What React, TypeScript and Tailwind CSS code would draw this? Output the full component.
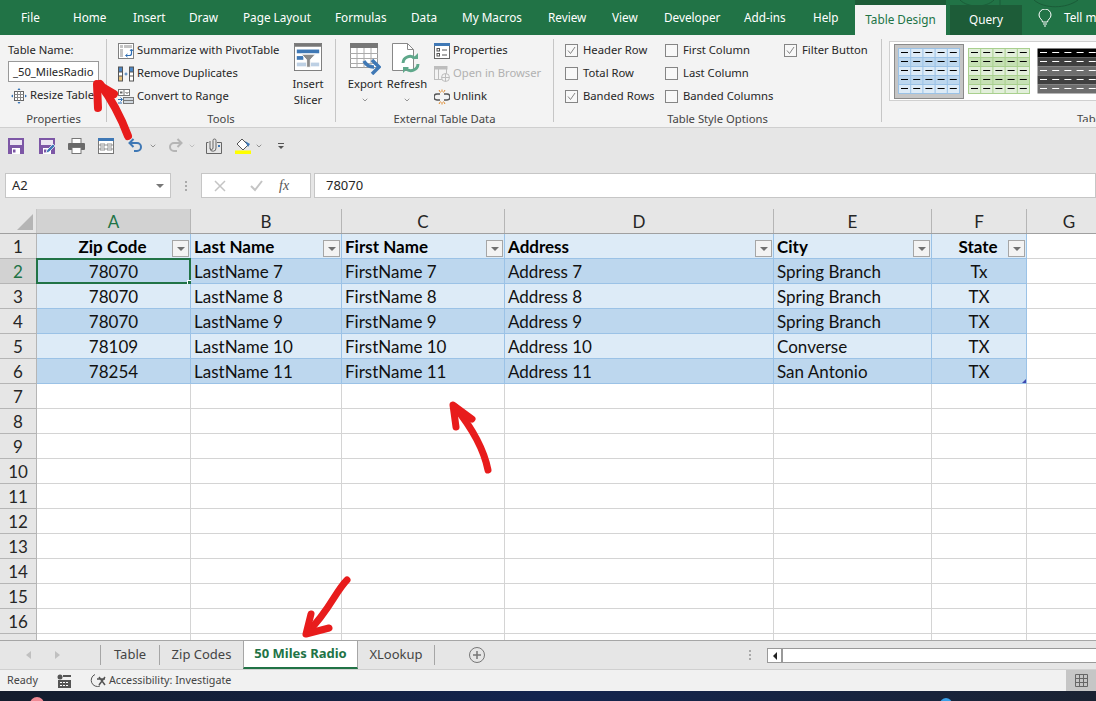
import React from "react";
import { ChevronDown } from "lucide-react";

const uiFont = { fontFamily: '"Noto Sans", "Open Sans", sans-serif' };
const cellFont = { fontFamily: 'Lato, "Open Sans", sans-serif' };

const tabs = [
  { name: "File", cls: "w-[52px]" },
  { name: "Home", cls: "w-[60px]" },
  { name: "Insert", cls: "w-[56px]" },
  { name: "Draw", cls: "w-[54px]" },
  { name: "Page Layout", cls: "w-[92px]" },
  { name: "Formulas", cls: "w-[76px]" },
  { name: "Data", cls: "w-[51px]" },
  { name: "My Macros", cls: "w-[86px]" },
  { name: "Review", cls: "w-[64px]" },
  { name: "View", cls: "w-[52px]" },
  { name: "Developer", cls: "w-[80px]" },
  { name: "Add-ins", cls: "w-[69px]" },
  { name: "Help", cls: "w-[42px]" },
];

const columns = [
  { label: "A", cls: "w-[154px]" },
  { label: "B", cls: "w-[151px]" },
  { label: "C", cls: "w-[163px]" },
  { label: "D", cls: "w-[269px]" },
  { label: "E", cls: "w-[158px]" },
  { label: "F", cls: "w-[95px]" },
  { label: "G", cls: "w-[85px]" },
];

const tableRows = [
  ["78070", "LastName 7", "FirstName 7", "Address 7", "Spring Branch", "Tx"],
  ["78070", "LastName 8", "FirstName 8", "Address 8", "Spring Branch", "TX"],
  ["78070", "LastName 9", "FirstName 9", "Address 9", "Spring Branch", "TX"],
  ["78109", "LastName 10", "FirstName 10", "Address 10", "Converse", "TX"],
  ["78254", "LastName 11", "FirstName 11", "Address 11", "San Antonio", "TX"],
];

const headers = ["Zip Code", "Last Name", "First Name", "Address", "City", "State"];

const Check = () => (
  <svg width="9" height="9" viewBox="0 0 9 9" fill="none" stroke="#777" strokeWidth="0.9">
    <path d="M1 4.5 3.5 7.5 8 1" />
  </svg>
);

const Option = ({ label, checked }: { label: string; checked?: boolean }) => (
  <div className="flex h-[23px] items-center">
    <span className="flex h-[13px] w-[13px] items-center justify-center border border-[#858585] bg-[#f8f8f8]">
      {checked && <Check />}
    </span>
    <span className="ml-[5px] whitespace-nowrap">{label}</span>
  </div>
);

const GroupLabel = ({ text }: { text: string }) => (
  <div className="mt-[4px] h-[14px] text-center leading-[14px] text-[#444]">{text}</div>
);

const StyleTile = ({ kind }: { kind: "blue" | "green" | "black" }) => {
  const band =
    kind === "blue"
      ? ["#ddebf7", "#bdd7ee"]
      : kind === "green"
      ? ["#e2efda", "#c6e0b4"]
      : ["#000000", "#404040", "#6e6e6e", "#404040", "#6e6e6e"];
  const line = kind === "blue" ? "#9bc2e6" : kind === "green" ? "#a9d08e" : "none";
  const dash = kind === "black" ? "#fff" : "#000";
  return (
    <svg width="62" height="46" viewBox="0 0 62 46" className="shrink-0">
      {[0, 1, 2, 3, 4].map((r) => (
        <g key={r}>
          <rect
            x="0.5"
            y={r * 9 + 0.5}
            width="61"
            height="9"
            fill={kind === "black" ? band[r] : band[r % 2]}
            stroke={line}
          />
          {[0, 1, 2, 3, 4].map((c) => (
            <g key={c}>
              {kind !== "black" && c > 0 && (
                <path d={`M${c * 12.2 + 0.5} ${r * 9}v9`} stroke={line} />
              )}
              <path d={`M${c * 12.2 + 3} ${r * 9 + 4.5}h7`} stroke={dash} />
            </g>
          ))}
        </g>
      ))}
    </svg>
  );
};

const IconSummarize = () => (
  <svg width="16" height="16" viewBox="0 0 16 16" fill="none">
    <rect x="0.5" y="0.5" width="15" height="15" fill="#fff" stroke="#808080" />
    <path d="M2 2h3v3H2zM6 2h8v3H6zM2 6h3v8H2z" fill="#c4c4c4" />
    <path d="M8 12.5h3.5a2 2 0 0 0 2-2V7" stroke="#2f6fb5" strokeWidth="1.2" />
    <path d="M12 8l1.500-2 1.500 2M9.500 11l-2 1.500 2 1.500" stroke="#2f6fb5" />
  </svg>
);

const IconDuplicates = () => (
  <svg width="16" height="16" viewBox="0 0 16 16">
    <rect x="0" y="0.500" width="5" height="15" fill="#555" />
    <rect x="11" y="0.500" width="5" height="15" fill="#555" />
    <rect x="1" y="1.500" width="3" height="4" fill="#4a86c5" />
    <rect x="1" y="6.500" width="3" height="3" fill="#fff" />
    <rect x="1" y="10.500" width="3" height="4" fill="#e8c27c" />
    <rect x="12" y="1.500" width="3" height="4" fill="#4a86c5" />
    <rect x="12" y="6.500" width="3" height="3" fill="#fff" />
    <rect x="12" y="10.500" width="3" height="4" fill="#fff" />
    <path d="M6.500 8h3M8 6.500v3" stroke="#3f78b5" />
  </svg>
);

const IconConvert = () => (
  <svg width="16" height="16" viewBox="0 0 16 16" fill="none">
    <rect x="0.500" y="0.500" width="11" height="6" fill="#fff" stroke="#777" />
    <path d="M6 .5v6" stroke="#777" />
    <rect x="2" y="2.500" width="2.500" height="2" fill="#666" />
    <path d="M7.500 3l1.500 1.500L10.500 3" stroke="#555" />
    <rect x="5.500" y="8.500" width="10" height="3" fill="#d0d8e0" stroke="#777" />
    <rect x="5.500" y="11.500" width="10" height="3" fill="#d0d8e0" stroke="#777" />
    <path d="M0 10.500h4M2.500 8.500l2 2-2 2M0 14h4" stroke="#2f6fb5" />
  </svg>
);

const IconResize = () => (
  <svg width="16" height="16" viewBox="0 0 16 16" fill="none">
    <rect x="3.500" y="3.500" width="9" height="9" fill="#fff" stroke="#666" />
    <path d="M3.500 6.500h9M3.500 9.500h9M6.500 3.500v9M9.500 3.500v9" stroke="#888" />
    <path d="M8 0l-1.500 2h3zM8 16l-1.500-2h3zM0 8l2-1.500v3zM16 8l-2-1.500v3z" fill="#2f6fb5" />
  </svg>
);

const IconSlicer = () => (
  <svg width="30" height="30" viewBox="0 0 30 30">
    <rect x="0.500" y="0.500" width="29" height="29" fill="#fff" stroke="#777" />
    <rect x="1" y="1" width="28" height="3" fill="#777" />
    <rect x="3" y="7" width="24" height="4" fill="#3f78b5" />
    <rect x="3" y="14" width="7" height="4" fill="#3f78b5" />
    <rect x="3" y="21" width="24" height="4" fill="#bdd0e4" />
    <path d="M8 12h15l-5.500 6v8h-4v-8z" fill="#8a8a8a" stroke="#fff" />
  </svg>
);

const IconExport = () => (
  <svg width="31" height="32" viewBox="0 0 31 32" fill="none">
    <rect x="0.500" y="0.500" width="27" height="24" fill="#fff" stroke="#999" />
    <rect x="0" y="0" width="28" height="5" fill="#777" />
    <path d="M0 10.500h28M0 15.500h28M0 20.500h28M7 5v20M14 5v20M21 5v20" stroke="#aaa" />
    <path d="M14 18a11 11 0 0 0 10 6" stroke="#3f78b5" strokeWidth="3.500" />
    <path d="M22 17l7 7-7 7" stroke="#3f78b5" strokeWidth="3.500" />
  </svg>
);

const IconRefresh = () => (
  <svg width="30" height="32" viewBox="0 0 30 32" fill="none">
    <path d="M.5.500h15l6 6v21H.5z" fill="#fff" stroke="#888" />
    <path d="M15.500.500v6h6" stroke="#888" />
    <path d="M11 20a7 7 0 0 1 12-4.500M26 21a7 7 0 0 1-12 4.500" stroke="#5fa88b" strokeWidth="3" />
    <path d="M20 16h6v-6zM17 24h-6v6z" fill="#5fa88b" />
  </svg>
);

const IconProperties = () => (
  <svg width="16" height="16" viewBox="0 0 16 16" fill="none">
    <rect x="0.500" y="0.500" width="15" height="15" fill="#fff" stroke="#666" />
    <rect x="0" y="0" width="16" height="3" fill="#3f78b5" />
    <rect x="3" y="5.500" width="2.500" height="2.500" stroke="#555" />
    <rect x="3" y="10.500" width="2.500" height="2.500" stroke="#555" />
    <path d="M8 7h5M8 12h5" stroke="#555" />
  </svg>
);

const IconBrowser = () => (
  <svg width="16" height="16" viewBox="0 0 16 16" fill="none" stroke="#bdbdbd">
    <rect x="0.500" y="0.500" width="12" height="13" fill="#f3f3f3" />
    <rect x="0" y="0" width="13" height="3" fill="#bdbdbd" />
    <path d="M4.500 3v10" />
    <circle cx="11.500" cy="11.500" r="4" fill="#f3f3f3" />
    <path d="M7.500 11.500h8M11.500 7.500v8" />
  </svg>
);

const IconUnlink = () => (
  <svg width="16" height="16" viewBox="0 0 16 16" fill="none">
    <path d="M6 5H3a2.500 2.500 0 0 0 0 6h3M10 5h3a2.500 2.500 0 0 1 0 6h-3" stroke="#555" strokeWidth="1.500" />
    <path d="M5 1l1.500 2.500M8 .5v2.500M11 1L9.500 3.500M5 15l1.500-2.500M8 15.500V13M11 15l-1.500-2.500" stroke="#e08a2c" />
  </svg>
);

const IconSave = ({ pen }: { pen?: boolean }) => (
  <svg width="16" height="16" viewBox="0 0 16 16">
    <path d="M0 0h16v16H0z" fill="#7d57a6" />
    <rect x="2" y="2" width="12" height="5" fill="#ece6f2" />
    <rect x="4" y="10" width="8" height="6" fill="#fff" />
    <rect x="5" y="11.500" width="2.500" height="3" fill="#7d57a6" />
    {pen && <path d="M7 15l1-3 6-6 2 2-6 6z" fill="#3f78b5" stroke="#fff" strokeWidth="0.700" />}
  </svg>
);

const IconPrint = () => (
  <svg width="17" height="16" viewBox="0 0 17 16">
    <rect x="4" y="0.500" width="9" height="5" fill="#fff" stroke="#777" />
    <rect x="0" y="5" width="17" height="7" rx="1" fill="#6a6a6a" />
    <rect x="4" y="9.500" width="9" height="6" fill="#fff" stroke="#777" />
  </svg>
);

const IconForm = () => (
  <svg width="16" height="16" viewBox="0 0 16 16" fill="none">
    <rect x="0.500" y="0.500" width="15" height="15" fill="#fff" stroke="#777" />
    <rect x="0" y="0" width="16" height="3" fill="#3f78b5" />
    <path d="M2 6h5v2H2zM9 6h5v2H9zM2 10h5v2H2zM9 10h5v2H9z" stroke="#777" strokeWidth="0.800" />
  </svg>
);

const IconUndo = ({ color, flip }: { color: string; flip?: boolean }) => (
  <svg width="15" height="15" viewBox="0 0 15 15" fill="none" className={flip ? "-scale-x-100" : ""}>
    <path d="M2 5h7a4 4 0 0 1 0 8H6" stroke={color} strokeWidth="2" />
    <path d="M5.500 1 1.500 5l4 4" stroke={color} strokeWidth="2" />
  </svg>
);

const IconAttach = () => (
  <svg width="16" height="16" viewBox="0 0 16 16" fill="none" stroke="#666">
    <path d="M.5 4.500h2M11 4.500h4.500v11H.5v-11" />
    <path d="M4 3v7a1.500 1.500 0 0 0 3 0V2.500a1.500 1.500 0 0 1 3 0V10a3 3 0 0 1-6 .5" />
    <rect x="12" y="7" width="2" height="2" fill="#3f78b5" stroke="none" />
  </svg>
);

const IconFill = () => (
  <svg width="16" height="16" viewBox="0 0 16 16" fill="none">
    <path d="M7 1l6 6-5 5-6-6z" fill="#fff" stroke="#555" />
    <path d="M10 3l5 3-2 3z" fill="#3f78b5" />
    <rect x="0" y="12.500" width="16" height="3.500" fill="#ffff00" />
  </svg>
);

const Chevron = ({ cls = "text-[#666]" }: { cls?: string }) => (
  <ChevronDown size={8} strokeWidth={2} className={cls} />
);

const App = () => {
  return (
    <div className="relative flex h-[701px] w-[1096px] flex-col overflow-hidden bg-white text-[#262626]" style={uiFont}>
      {/* title bar with tabs */}
      <div className="relative flex h-[35px] shrink-0 items-end bg-[#217346] pl-[21px] text-[11.75px] text-white">
        <svg className="pointer-events-none absolute left-[950px] top-0" width="146" height="14" viewBox="0 0 146 14" fill="none" stroke="#1a5c38">
          <path d="M10 0c8 8 26 8 34 0M50 0v6a6 6 0 0 0 7 6M84 0c10 9 32 9 44 0" />
        </svg>
        <div className="flex h-[35px] items-center">
          {tabs.map((t) => (
            <span key={t.name} className={`shrink-0 whitespace-nowrap ${t.cls}`}>
              {t.name}
            </span>
          ))}
        </div>
        <div className="relative flex h-[35px] items-end pt-[5px]">
          <span className="absolute left-0 top-0 h-[5px] w-[91px] bg-[#1d5c38]" />
          <div className="flex h-[30px] w-[91px] items-center justify-center bg-[#f3f3f3] text-[#217346]">Table Design</div>
          <div className="ml-[4px] flex h-[30px] w-[72px] items-center justify-center bg-[#1d5c38]">Query</div>
        </div>
        <div className="relative flex h-[35px] items-center">
          <svg width="14" height="18" viewBox="0 0 14 18" fill="none" stroke="#fff" className="ml-[16px]">
            <path d="M4.500 13c0-2.500-3.500-3.500-3.500-7a6 6 0 0 1 12 0c0 3.500-3.500 4.500-3.500 7zM5 15h4M6 17h2" />
          </svg>
          <span className="ml-[12px] whitespace-nowrap">Tell me</span>
        </div>
      </div>

      {/* ribbon */}
      <div className="flex h-[93px] shrink-0 border-b border-[#cfcfcf] bg-[#f3f3f3] pt-[4px] text-[11.25px]">
        <div className="h-[83px] w-[107px] shrink-0 border-r border-[#c6c6c6] pl-[8px] pr-[7px]">
          <div className="flex h-[69px] flex-col">
            <div className="flex h-[22px] shrink-0 items-center">Table Name:</div>
            <div className="h-[21px] w-[91px] shrink-0 border border-[#999] bg-white pl-[4px] leading-[19px]">_50_MilesRadio</div>
            <div className="flex h-[27px] shrink-0 items-center pl-[3px]">
              <IconResize />
              <span className="ml-[3px] whitespace-nowrap">Resize Table</span>
            </div>
          </div>
          <GroupLabel text="Properties" />
        </div>

        <div className="h-[83px] w-[229px] shrink-0 border-r border-[#c6c6c6]">
          <div className="flex h-[69px]">
            <div className="ml-[11px] w-[175px]">
              <div className="flex h-[23px] items-center gap-[3px] whitespace-nowrap"><IconSummarize />Summarize with PivotTable</div>
              <div className="flex h-[23px] items-center gap-[3px] whitespace-nowrap"><IconDuplicates />Remove Duplicates</div>
              <div className="flex h-[23px] items-center gap-[3px] whitespace-nowrap"><IconConvert />Convert to Range</div>
            </div>
            <div className="flex w-[30px] flex-col items-center pt-[4px] text-center leading-[16px]">
              <IconSlicer />
              <div className="mt-[5px]">Insert</div>
              <div>Slicer</div>
            </div>
          </div>
          <GroupLabel text="Tools" />
        </div>

        <div className="h-[83px] w-[218px] shrink-0 border-r border-[#c6c6c6]">
          <div className="flex h-[69px]">
            <div className="ml-[9px] flex w-[40px] flex-col items-center pt-[4px] leading-[16px]">
              <IconExport />
              <div className="mt-px">Export</div>
              <Chevron cls="mt-[4px] text-[#666]" />
            </div>
            <div className="flex w-[44px] flex-col items-center pt-[4px] leading-[16px]">
              <IconRefresh />
              <div className="mt-px">Refresh</div>
              <Chevron cls="mt-[4px] text-[#666]" />
            </div>
            <div className="ml-[5px]">
              <div className="flex h-[23px] items-center gap-[3px] whitespace-nowrap"><IconProperties />Properties</div>
              <div className="flex h-[23px] items-center gap-[3px] whitespace-nowrap text-[#b1b1b1]"><IconBrowser />Open in Browser</div>
              <div className="flex h-[23px] items-center gap-[3px] whitespace-nowrap"><IconUnlink />Unlink</div>
            </div>
          </div>
          <GroupLabel text="External Table Data" />
        </div>

        <div className="h-[83px] w-[328px] shrink-0 border-r border-[#c6c6c6]">
          <div className="flex h-[69px]">
            <div className="ml-[11px] w-[100px]">
              <Option label="Header Row" checked />
              <Option label="Total Row" />
              <Option label="Banded Rows" checked />
            </div>
            <div className="w-[119px]">
              <Option label="First Column" />
              <Option label="Last Column" />
              <Option label="Banded Columns" />
            </div>
            <Option label="Filter Button" checked />
          </div>
          <GroupLabel text="Table Style Options" />
        </div>

        <div className="h-[83px] min-w-0 flex-1 overflow-hidden">
          <div className="ml-[7px] mt-[2px] flex h-[60px] w-[300px] items-center border border-[#d0d0d0] bg-white pl-[4px]">
            <div className="flex h-[55px] w-[70px] shrink-0 items-center justify-center border border-[#8a8a8a] bg-[#c6c6c6]">
              <StyleTile kind="blue" />
            </div>
            <div className="ml-[4px]"><StyleTile kind="green" /></div>
            <div className="ml-[7px]"><StyleTile kind="black" /></div>
          </div>
          <div className="ml-[195px] mt-[11px] h-[14px] whitespace-nowrap leading-[14px] text-[#444]">Table Styles</div>
        </div>
      </div>

      {/* quick access */}
      <div className="flex h-[35px] shrink-0 items-center bg-[#e6e6e6] pl-[8px]">
        <IconSave />
        <span className="ml-[15px]"><IconSave pen /></span>
        <span className="ml-[13px]"><IconPrint /></span>
        <span className="ml-[13px]"><IconForm /></span>
        <span className="ml-[14px]"><IconUndo color="#3f78b5" /></span>
        <span className="ml-[6px]"><Chevron /></span>
        <span className="ml-[11px]"><IconUndo color="#b5b5b5" flip /></span>
        <span className="ml-[5px]"><Chevron cls="text-[#aaa]" /></span>
        <span className="ml-[10px]"><IconAttach /></span>
        <span className="ml-[13px]"><IconFill /></span>
        <span className="ml-[4px]"><Chevron /></span>
        <span className="ml-[15px] flex flex-col items-center">
          <span className="mb-[2px] h-px w-[6px] bg-[#555]" />
          <span className="h-0 w-0 border-x-[3px] border-t-[3px] border-x-transparent border-t-[#555]" />
        </span>
      </div>

      {/* formula bar */}
      <div className="flex h-[46px] shrink-0 items-start bg-[#e6e6e6] pt-[10px] text-[13px]">
        <div className="ml-[5px] flex h-[25px] w-[166px] items-center justify-between border border-[#c6c6c6] bg-white pl-[6px] pr-[6px]">
          <span>A2</span>
          <span className="h-0 w-0 border-x-[4px] border-t-[4px] border-x-transparent border-t-[#777]" />
        </div>
        <div className="flex h-[25px] w-[30px] flex-col items-center justify-center gap-[2px]">
          <span className="h-[2px] w-[2px] bg-[#aaa]" />
          <span className="h-[2px] w-[2px] bg-[#aaa]" />
          <span className="h-[2px] w-[2px] bg-[#aaa]" />
        </div>
        <div className="flex h-[25px] w-[110px] items-center border border-[#c6c6c6] bg-white text-[#c4c4c4]">
          <svg width="12" height="12" viewBox="0 0 12 12" stroke="#c4c4c4" strokeWidth="1.500" className="ml-[12px]">
            <path d="M1 1l10 10M11 1 1 11" />
          </svg>
          <svg width="13" height="12" viewBox="0 0 13 12" stroke="#c4c4c4" strokeWidth="2" fill="none" className="ml-[24px]">
            <path d="M1 6l4 4 7-9" />
          </svg>
          <span className="ml-[16px] text-[14px] italic text-[#555]" style={{ fontFamily: '"Liberation Serif", serif' }}>fx</span>
        </div>
        <div className="ml-[3px] flex h-[25px] flex-1 items-center border border-[#c6c6c6] bg-white pl-[11px]">78070</div>
      </div>

      {/* sheet */}
      <div className="relative min-h-0 flex-1 overflow-hidden border-b border-[#a6a6a6] text-[17px]" style={cellFont}>
        <div className="flex h-[25px] border-b border-[#a0a0a0] bg-[#e6e6e6]">
          <div className="relative h-full w-[37px] shrink-0 border-r border-[#c6c6c6]">
            <span className="absolute bottom-[3px] right-[3px] h-0 w-0 border-b-[16px] border-l-[16px] border-b-[#b5b5b5] border-l-transparent" />
          </div>
          {columns.map((c, i) => (
            <div
              key={c.label}
              className={`flex shrink-0 items-center justify-center border-r border-[#b5b5b5] pt-px ${c.cls} ${
                i === 0 ? "bg-[#d2d2d2] text-[#217346]" : ""
              }`}
            >
              {c.label}
            </div>
          ))}
        </div>

        {Array.from({ length: 17 }).map((_, r) => {
          const isHead = r === 0;
          const data = r >= 1 && r <= 5 ? tableRows[r - 1] : null;
          const inTable = r <= 5;
          const rowBg = isHead ? "bg-[#ddebf7]" : r % 2 === 1 ? "bg-[#bdd7ee]" : "bg-[#ddebf7]";
          return (
            <div key={r} className="flex h-[25px]">
              <div
                className={`flex w-[37px] shrink-0 items-center justify-center border-b border-r border-[#b5b5b5] pt-px ${
                  r === 1 ? "bg-[#d2d2d2] text-[#217346]" : "bg-[#e6e6e6]"
                }`}
              >
                {r < 16 ? r + 1 : ""}
              </div>
              {columns.map((c, i) => {
                const tableCell = inTable && i < 6;
                const text = isHead ? headers[i] : data ? data[i] : "";
                const centered = i === 0 || i === 5;
                return (
                  <div
                    key={c.label}
                    className={`relative flex shrink-0 items-center border-b border-r pt-px ${c.cls} ${
                      tableCell ? `${rowBg} border-[#9bc2e6]` : "border-[#d4d4d4]"
                    } ${centered ? "justify-center" : "pl-[3px]"} ${isHead ? "font-bold text-black" : "text-[#111]"}`}
                  >
                    <span className={isHead && centered ? "pr-[2px]" : ""}>{text}</span>
                    {isHead && i < 6 && (
                      <span className="absolute right-[1px] top-[6px] flex h-[17px] w-[17px] items-center justify-center border border-[#a6a6a6] bg-[#f3f3f3]">
                        <span className="h-0 w-0 border-x-[4px] border-t-[4px] border-x-transparent border-t-[#707070]" />
                      </span>
                    )}
                    {r === 1 && i === 0 && (
                      <>
                        <span className="absolute inset-[-1px] border-2 border-[#217346]" />
                        <span className="absolute bottom-[-3px] right-[-3px] h-[6px] w-[6px] border border-white bg-[#217346]" />
                      </>
                    )}
                    {r === 5 && i === 5 && (
                      <span className="absolute bottom-0 right-0 h-0 w-0 border-b-[4px] border-l-[4px] border-b-[#3f48b0] border-l-transparent" />
                    )}
                  </div>
                );
              })}
            </div>
          );
        })}
      </div>

      {/* sheet tabs */}
      <div className="flex h-[28px] shrink-0 items-stretch bg-[#e6e6e6] text-[13px] text-[#444]">
        <div className="flex w-[100px] items-center pl-[26px]">
          <span className="h-0 w-0 border-y-[4px] border-r-[5px] border-y-transparent border-r-[#c0c0c0]" />
          <span className="ml-[24px] h-0 w-0 border-y-[4px] border-l-[5px] border-y-transparent border-l-[#c0c0c0]" />
        </div>
        <div className="my-[4px] flex w-[59px] items-center justify-center border-l border-[#a6a6a6]">Table</div>
        <div className="my-[4px] flex w-[84px] items-center justify-center border-l border-[#a6a6a6]">Zip Codes</div>
        <div className="-mt-px flex w-[115px] items-center justify-center border-x border-b-2 border-x-[#a6a6a6] border-b-[#217346] bg-white font-bold text-[#217346]">50 Miles Radio</div>
        <div className="my-[4px] flex w-[77px] items-center justify-center border-r border-[#a6a6a6]">XLookup</div>
        <div className="flex w-[317px] items-center pl-[34px]">
          <svg width="16" height="16" viewBox="0 0 16 16" fill="none" stroke="#777">
            <circle cx="8" cy="8" r="7.500" />
            <path d="M4 8h8M8 4v8" strokeWidth="1.500" />
          </svg>
          <div className="ml-[264px] flex flex-col gap-[2px]">
            <span className="h-[2px] w-[2px] bg-[#aaa]" />
            <span className="h-[2px] w-[2px] bg-[#aaa]" />
            <span className="h-[2px] w-[2px] bg-[#aaa]" />
          </div>
        </div>
        <div className="ml-[15px] mt-[7px] flex h-[15px] flex-1 border border-r-0 border-[#999] bg-white">
          <div className="flex w-[15px] items-center justify-center border-r-2 border-[#999]">
            <span className="h-0 w-0 border-y-[4px] border-r-[4px] border-y-transparent border-r-[#222]" />
          </div>
        </div>
      </div>

      {/* status bar */}
      <div className="flex h-[22px] shrink-0 items-center border-t border-[#d0d0d0] bg-[#f1f1f1] text-[10.75px] text-[#444]">
        <span className="ml-[7px]">Ready</span>
        <svg width="14" height="14" viewBox="0 0 14 14" className="ml-[19px]" fill="#555">
          <circle cx="3" cy="3" r="2.500" />
          <path d="M6 1h8v2H6zM1 6h13v8H1z" />
          <path d="M3 8h2v1H3zM6 8h2v1H6zM9 8h2v1H9zM3 11h2v1H3zM6 11h2v1H6zM9 11h2v1H9z" fill="#fff" />
        </svg>
        <svg width="17" height="15" viewBox="0 0 17 15" fill="none" stroke="#555" className="ml-[18px]">
          <path d="M6 1.500A6 6 0 1 0 11 13" />
          <path d="M10 4l6 8M16 4l-6 8M8 6h8" strokeWidth="1.500" />
        </svg>
        <span className="ml-[3px]">Accessibility: Investigate</span>
        <div className="ml-auto flex h-full w-[30px] items-center justify-center bg-[#c6c6c6]">
          <svg width="13" height="13" viewBox="0 0 13 13" fill="none" stroke="#666">
            <path d="M.5.5h12v12H.5zM4.500.5v12M8.500.5v12M.5 4.500h12M.5 8.500h12" />
          </svg>
        </div>
      </div>

      {/* taskbar sliver */}
      <div className="relative h-[10px] shrink-0 overflow-hidden bg-gradient-to-r from-[#141c2c] via-[#13244f] to-[#1a2232]">
        <span className="absolute left-[30px] top-[6px] h-[14px] w-[14px] rounded-full bg-[#f08a94]" />
        <span className="absolute left-[940px] top-[7px] h-[12px] w-[12px] rounded-full bg-[#3aa0e8]" />
      </div>

      {/* red annotation arrows */}
      <svg className="pointer-events-none absolute inset-0" width="1096" height="701" fill="none" stroke="#e81c1c" strokeLinecap="round" strokeLinejoin="round">
        <path d="M128 136C122 120 112 100 100 84" strokeWidth="8" />
        <path d="M98 108 97 84 114 94" strokeWidth="8" />
        <path d="M488 470C484 450 472 428 455 407" strokeWidth="7" />
        <path d="M456 427 453 405 472 419" strokeWidth="7" />
        <path d="M347 580C335 592 330 610 307 633" strokeWidth="7" />
        <path d="M311 614 306 634 329 628" strokeWidth="7" />
      </svg>
    </div>
  );
};

export default App;
